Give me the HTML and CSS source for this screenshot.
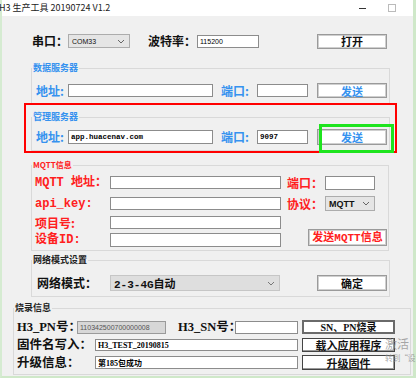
FILE: index.html
```html
<!DOCTYPE html>
<html lang="zh-CN">
<head>
  <meta charset="UTF-8">
  <title>H3 生产工具 20190724 V1.2</title>
  <link rel="stylesheet" href="styles.css">
</head>
<body>
  <div class="screen">
    <div class="win">
      <div class="titlebar">
        <span class="title">H3 生产工具 20190724 V1.2</span>
        <span class="tb-min"></span>
        <span class="tb-max"></span>
      </div>

      <!-- 串口设置 -->
      <div class="row r-port">
        <span class="lbl w36">串口：</span>
        <div class="combo w62 h14"><span>COM33</span><svg width="8" height="5" viewBox="0 0 8 5"><path d="M1 1 L4 4 L7 1" fill="none" stroke="#666" stroke-width="1"/></svg></div>
        <span class="lbl w49 ml18">波特率：</span>
        <input class="edit w62 h13" value="115200">
        <button class="btn w70 h15 ml58">打开</button>
      </div>

      <fieldset class="grp g-data">
        <legend class="blue">数据服务器</legend>
        <div class="row r-srv">
          <span class="lbl blue w32">地址:</span>
          <input class="edit w145 h13">
          <span class="lbl blue w36 ml8">端口:</span>
          <input class="edit w51 h13">
          <button class="btn blue w70 h15 ml9">发送</button>
        </div>
      </fieldset>

      <fieldset class="grp g-mgr">
        <legend class="blue">管理服务器</legend>
        <div class="row r-mgr">
          <span class="lbl blue w32">地址:</span>
          <input class="edit mono w145 h14" value="app.huacenav.com">
          <span class="lbl blue w36 ml8">端口:</span>
          <input class="edit mono w51 h14" value="9097">
          <button class="btn blue w70 h16 ml9">发送</button>
        </div>
      </fieldset>

      <fieldset class="grp g-mqtt">
        <legend class="red">MQTT信息</legend>
        <div class="row r-mq">
          <span class="lbl red mixed w75">MQTT 地址：</span>
          <input class="edit w171 h13">
          <span class="lbl red w38 ml6">端口：</span>
          <input class="edit w50 h14">
        </div>
        <div class="row r-mq mt6">
          <span class="lbl red mixed w75">api_key:</span>
          <input class="edit w171 h13">
          <span class="lbl red w38 ml6">协议：</span>
          <div class="combo w50 h15"><span class="bold">MQTT</span><svg width="8" height="5" viewBox="0 0 8 5"><path d="M1 1 L4 4 L7 1" fill="none" stroke="#666" stroke-width="1"/></svg></div>
        </div>
        <div class="row r-mq mt4">
          <span class="lbl red w75">项目号:</span>
          <input class="edit w171 h13">
        </div>
        <div class="row r-mq mt2">
          <span class="lbl red mixed w75">设备ID:</span>
          <input class="edit w171 h14">
          <button class="btn red w79 h17 ml27 btn-low">发送MQTT信息</button>
        </div>
      </fieldset>

      <fieldset class="grp g-net">
        <legend>网络模式设置</legend>
        <div class="row r-net">
          <span class="lbl w73">网络模式：</span>
          <div class="combo combo-gray w170 h16"><span class="bold big">2-3-4G自动</span><svg width="8" height="5" viewBox="0 0 8 5"><path d="M1 1 L4 4 L7 1" fill="none" stroke="#777" stroke-width="1"/></svg></div>
          <button class="btn w70 h16 ml37">确定</button>
        </div>
      </fieldset>

      <fieldset class="grp g-burn">
        <legend>烧录信息</legend>
        <div class="row r-burn">
          <span class="lbl big serif w60">H3_PN号：</span>
          <input class="edit ro w89 h13" value="110342500700000008" readonly>
          <span class="lbl big serif w57 ml12">H3_SN号：</span>
          <input class="edit w63 h13">
          <button class="btn dark focus w93 h14 ml4">SN、PN烧录</button>
        </div>
        <div class="row r-burn mt4">
          <span class="lbl big serif w78">固件名写入：</span>
          <input class="edit bname w203 h12" value="H3_TEST_20190815">
          <button class="btn dark w93 h14 ml4">载入应用程序</button>
        </div>
        <div class="row r-burn3 mt3">
          <span class="lbl big serif w78">升级信息：</span>
          <input class="edit bname w203 h13" value="第185包成功">
          <button class="btn dark w93 h15 ml4">升级固件</button>
        </div>
      </fieldset>
    </div>

    <!-- 标注框 -->
    <div class="mark-red"></div>
    <div class="mark-green"></div>

    <div class="wm">
      <div class="wm-big">激活</div>
      <div class="wm-small">转到“设</div>
    </div>
  </div>
</body>
</html>
```

FILE: styles.css
```css
* {
  box-sizing: border-box;
}

body {
  margin: 0;
  background: #fff;
}

.screen {
  position: relative;
  width: 416px;
  height: 378px;
  overflow: hidden;
}

.win {
  width: 416px;
  height: 378px;
  background: #f0f0f0;
  border-left: 2px solid #d5ebd1;
  border-right: 3px solid #cfe8c9;
  border-bottom: 2px solid #cfe8c9;
  font-family: "Noto Sans CJK SC", sans-serif;
  color: #111;
}

.titlebar {
  height: 16px;
  background: #fff;
  display: flex;
  align-items: center;
}

.title {
  font-size: 9px;
  line-height: 16px;
  margin-left: -3px;
  white-space: nowrap;
  color: #222;
}

.tb-min {
  margin-left: auto;
  width: 7px;
  height: 1px;
  background: #333;
}

.tb-max {
  margin-left: 22px;
  margin-right: 17px;
  width: 8px;
  height: 8px;
  border: 1px solid #bbb;
}

.row {
  display: flex;
  align-items: center;
}

.r-port { height: 16px; margin: 17px 0 0 30px; }
.r-srv { height: 15px; margin-left: 4px; }
.r-mgr { height: 16px; margin-left: 4px; }
.r-mq { height: 15px; margin-left: 3px; }
.r-net { height: 16px; margin-left: 5px; }
.r-burn { height: 14px; margin-left: 3px; }
.r-burn3 { height: 15px; margin-left: 3px; }

/* group boxes */
.grp {
  margin: 0;
  padding: 0;
  border: 1px solid #d9d9d9;
  min-width: 0;
}

.grp legend {
  padding: 0 1px;
  font-size: 9px;
  line-height: 10px;
  font-weight: bold;
  color: #222;
}

.g-data { margin: 14px 0 0 29px; width: 359px; padding: 10px 0 5px; }
.g-mgr { margin: 8px 0 0 29px; width: 359px; padding: 7px 0 5px; }
.g-mqtt { margin: 9px 0 0 29px; width: 358px; padding: 5px 0 3px; }
.g-net { margin: 4px 0 0 29px; width: 359px; padding: 10px 0 5px; }
.g-burn { margin: 6px 0 0 11px; width: 398px; padding: 7px 0 4px; }

.g-mqtt legend { font-size: 8px; }

/* labels */
.lbl {
  flex: none;
  font-weight: bold;
  font-size: 12px;
  line-height: 16px;
  white-space: nowrap;
}

.lbl.mixed {
  font-family: "Liberation Mono", "Noto Sans CJK SC", monospace;
}

.lbl.big {
  font-size: 12.5px;
}

.lbl.serif {
  font-family: "Liberation Serif", "Noto Sans CJK SC", serif;
}

.blue { color: #3592ef !important; }
.red { color: #ff2020 !important; }

/* text boxes */
.edit {
  flex: none;
  margin: 0;
  padding: 0 2px;
  background: #fff;
  border: 1px solid #8c8c8c;
  font-family: "Liberation Sans", sans-serif;
  font-size: 7px;
  color: #000;
  outline: none;
}

.edit.mono {
  font-family: "Liberation Mono", monospace;
  font-size: 7.5px;
  font-weight: bold;
}

.edit.bname {
  font-family: "Liberation Serif", "Noto Sans CJK SC", serif;
  font-size: 8px;
  font-weight: bold;
}

.edit.ro {
  background: #d7d7d7;
  color: #555;
  border-color: #9a9a9a;
}

/* combo boxes */
.combo {
  flex: none;
  display: flex;
  align-items: center;
  justify-content: space-between;
  padding: 0 4px 0 3px;
  background: #e5e5e5;
  border: 1px solid #acacac;
  font-family: "Liberation Sans", sans-serif;
  font-size: 7px;
}

.combo-gray {
  background: #dedede;
  border-color: #c6c6c6;
}

.combo .bold {
  font-weight: bold;
  font-size: 9px;
}

.combo .big {
  font-family: "Liberation Mono", "Noto Sans CJK SC", monospace;
  font-size: 11px;
}

/* buttons */
.btn {
  flex: none;
  margin-top: 0;
  margin-bottom: 0;
  padding: 0;
  background: #fff;
  border: 1px solid #9a9a9a;
  box-shadow: inset 0 0 0 1px #cfcfcf;
  font-family: "Noto Sans CJK SC", sans-serif;
  font-size: 11px;
  line-height: 12px;
  font-weight: bold;
  color: #111;
}

.btn.red {
  font-family: "Liberation Mono", "Noto Sans CJK SC", monospace;
}

.btn-low {
  align-self: flex-end;
  margin-bottom: 1px;
}

.btn.dark {
  border-color: #444;
  box-shadow: inset -1px -1px 0 #9a9a9a;
}

.btn.focus {
  border: 2px solid #6a6a6a;
  box-shadow: none;
  font-family: "Liberation Serif", "Noto Sans CJK SC", serif;
  font-size: 10px;
}

/* sizes */
.w32 { width: 32px; }
.w36 { width: 36px; }
.w38 { width: 38px; }
.w49 { width: 49px; }
.w50 { width: 50px; }
.w51 { width: 51px; }
.w57 { width: 57px; }
.w60 { width: 60px; }
.w62 { width: 62px; }
.w63 { width: 63px; }
.w70 { width: 70px; }
.w73 { width: 73px; }
.w75 { width: 75px; }
.w78 { width: 78px; }
.w79 { width: 79px; }
.w89 { width: 89px; }
.w93 { width: 93px; }
.w145 { width: 145px; }
.w170 { width: 170px; }
.w171 { width: 171px; }
.w203 { width: 203px; }

.h12 { height: 12px; }
.h13 { height: 13px; }
.h14 { height: 14px; }
.h15 { height: 15px; }
.h16 { height: 16px; }
.h17 { height: 17px; }

.ml4 { margin-left: 4px; }
.ml6 { margin-left: 6px; }
.ml8 { margin-left: 8px; }
.ml9 { margin-left: 9px; }
.ml12 { margin-left: 12px; }
.ml18 { margin-left: 18px; }
.ml27 { margin-left: 27px; }
.ml37 { margin-left: 37px; }
.ml58 { margin-left: 58px; }

.mt2 { margin-top: 2px; }
.mt3 { margin-top: 3px; }
.mt4 { margin-top: 4px; }
.mt6 { margin-top: 6px; }

/* annotation frames drawn over the window */
.mark-red {
  position: absolute;
  left: 24px;
  top: 103px;
  width: 373px;
  height: 50px;
  border: 2px solid #ff0000;
}

.mark-green {
  position: absolute;
  left: 319px;
  top: 124px;
  width: 75px;
  height: 29px;
  border: 3px solid #1ee41e;
}

/* activation watermark */
.wm {
  position: absolute;
  left: 385px;
  top: 335px;
  white-space: nowrap;
  color: rgba(140, 140, 140, 0.75);
  font-family: "Noto Sans CJK SC", sans-serif;
}

.wm-big {
  font-size: 12px;
  line-height: 17px;
}

.wm-small {
  font-size: 8px;
  line-height: 12px;
  letter-spacing: -0.5px;
}
```
